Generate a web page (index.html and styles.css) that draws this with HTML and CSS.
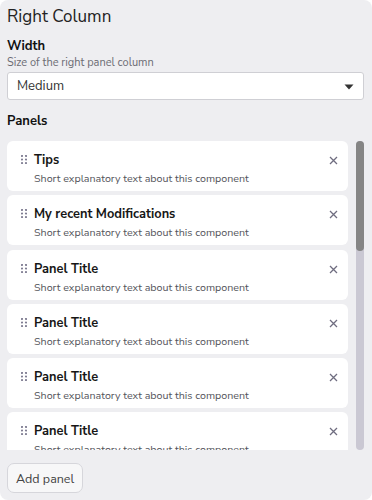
FILE: index.html
```html
<!DOCTYPE html>
<html>
<head>
<meta charset="utf-8">
<link rel="stylesheet" href="styles.css">
</head>
<body>
<div class="panel">
  <h1 class="title">Right Column</h1>
  <div class="field">
    <div class="label">Width</div>
    <div class="help">Size of the right panel column</div>
    <div class="select">
      <span>Medium</span>
      <svg class="caret" width="10" height="6" viewBox="0 0 10 6"><path d="M0.5 0.5h9L5 5.5z" fill="#333"/></svg>
    </div>
  </div>
  <div class="label panels-label">Panels</div>
  <div class="scroller">
    <div class="list">
      <div class="card">
        <svg class="handle" width="6" height="9" viewBox="0 0 6 9"><g fill="#7f7d92"><circle cx="1" cy="1" r="1.1"/><circle cx="5" cy="1" r="1.1"/><circle cx="1" cy="4.5" r="1.1"/><circle cx="5" cy="4.5" r="1.1"/><circle cx="1" cy="8" r="1.1"/><circle cx="5" cy="8" r="1.1"/></g></svg>
        <div class="text"><div class="ctitle">Tips</div><div class="csub">Short explanatory text about this component</div></div>
        <svg class="close" width="9" height="9" viewBox="0 0 9 9"><path d="M1 1l7 7M8 1l-7 7" stroke="#6f6d80" stroke-width="1.3"/></svg>
      </div>
      <div class="card">
        <svg class="handle" width="6" height="9" viewBox="0 0 6 9"><g fill="#7f7d92"><circle cx="1" cy="1" r="1.1"/><circle cx="5" cy="1" r="1.1"/><circle cx="1" cy="4.5" r="1.1"/><circle cx="5" cy="4.5" r="1.1"/><circle cx="1" cy="8" r="1.1"/><circle cx="5" cy="8" r="1.1"/></g></svg>
        <div class="text"><div class="ctitle">My recent Modifications</div><div class="csub">Short explanatory text about this component</div></div>
        <svg class="close" width="9" height="9" viewBox="0 0 9 9"><path d="M1 1l7 7M8 1l-7 7" stroke="#6f6d80" stroke-width="1.3"/></svg>
      </div>
      <div class="card">
        <svg class="handle" width="6" height="9" viewBox="0 0 6 9"><g fill="#7f7d92"><circle cx="1" cy="1" r="1.1"/><circle cx="5" cy="1" r="1.1"/><circle cx="1" cy="4.5" r="1.1"/><circle cx="5" cy="4.5" r="1.1"/><circle cx="1" cy="8" r="1.1"/><circle cx="5" cy="8" r="1.1"/></g></svg>
        <div class="text"><div class="ctitle">Panel Title</div><div class="csub">Short explanatory text about this component</div></div>
        <svg class="close" width="9" height="9" viewBox="0 0 9 9"><path d="M1 1l7 7M8 1l-7 7" stroke="#6f6d80" stroke-width="1.3"/></svg>
      </div>
      <div class="card">
        <svg class="handle" width="6" height="9" viewBox="0 0 6 9"><g fill="#7f7d92"><circle cx="1" cy="1" r="1.1"/><circle cx="5" cy="1" r="1.1"/><circle cx="1" cy="4.5" r="1.1"/><circle cx="5" cy="4.5" r="1.1"/><circle cx="1" cy="8" r="1.1"/><circle cx="5" cy="8" r="1.1"/></g></svg>
        <div class="text"><div class="ctitle">Panel Title</div><div class="csub">Short explanatory text about this component</div></div>
        <svg class="close" width="9" height="9" viewBox="0 0 9 9"><path d="M1 1l7 7M8 1l-7 7" stroke="#6f6d80" stroke-width="1.3"/></svg>
      </div>
      <div class="card">
        <svg class="handle" width="6" height="9" viewBox="0 0 6 9"><g fill="#7f7d92"><circle cx="1" cy="1" r="1.1"/><circle cx="5" cy="1" r="1.1"/><circle cx="1" cy="4.5" r="1.1"/><circle cx="5" cy="4.5" r="1.1"/><circle cx="1" cy="8" r="1.1"/><circle cx="5" cy="8" r="1.1"/></g></svg>
        <div class="text"><div class="ctitle">Panel Title</div><div class="csub">Short explanatory text about this component</div></div>
        <svg class="close" width="9" height="9" viewBox="0 0 9 9"><path d="M1 1l7 7M8 1l-7 7" stroke="#6f6d80" stroke-width="1.3"/></svg>
      </div>
      <div class="card">
        <svg class="handle" width="6" height="9" viewBox="0 0 6 9"><g fill="#7f7d92"><circle cx="1" cy="1" r="1.1"/><circle cx="5" cy="1" r="1.1"/><circle cx="1" cy="4.5" r="1.1"/><circle cx="5" cy="4.5" r="1.1"/><circle cx="1" cy="8" r="1.1"/><circle cx="5" cy="8" r="1.1"/></g></svg>
        <div class="text"><div class="ctitle">Panel Title</div><div class="csub">Short explanatory text about this component</div></div>
        <svg class="close" width="9" height="9" viewBox="0 0 9 9"><path d="M1 1l7 7M8 1l-7 7" stroke="#6f6d80" stroke-width="1.3"/></svg>
      </div>
    </div>
    <div class="scrollbar"><div class="thumb"></div></div>
  </div>
  <div class="footer">
    <button class="add">Add panel</button>
  </div>
</div>
</body>
</html>
```
FILE: styles.css
```css
* { box-sizing: border-box; }
html, body { margin: 0; padding: 0; background: #fff; }
body { font-family: "Nunito Sans", Lato, "Noto Sans", sans-serif; color: #1b1b1f; }
.panel {
  width: 372px;
  height: 500px;
  background: #eeeef1;
  border-radius: 8px;
  padding: 5px 8px 0 7px;
  display: flex;
  flex-direction: column;
  overflow: hidden;
}
.title {
  margin: 0;
  font-size: 17px;
  font-weight: 400;
  line-height: 24px;
  color: #222;
}
.field { margin-top: 8px; }
.label {
  font-size: 13px;
  font-weight: 700;
  line-height: 18px;
  color: #111;
}
.help {
  font-size: 11px;
  line-height: 15px;
  color: #6c6c74;
}
.select {
  margin-top: 2px;
  height: 28px;
  background: #fff;
  border: 1px solid #cfcfd4;
  border-radius: 3px;
  display: flex;
  align-items: center;
  justify-content: space-between;
  padding: 0 9px 0 9px;
  font-size: 13px;
  color: #333;
}
.caret { margin-top: 1px; }
.panels-label { margin-top: 12px; }
.scroller {
  margin-top: 11px;
  height: 309px;
  display: flex;
  gap: 8px;
}
.list {
  flex: 1;
  overflow: hidden;
  display: flex;
  flex-direction: column;
  gap: 4.3px;
}
.scrollbar {
  flex: none;
  width: 8px;
  background: #cac8d3;
  border-radius: 4px;
  display: flex;
  flex-direction: column;
}
.thumb {
  height: 110px;
  background: #858585;
  border-radius: 4px;
}
.card {
  flex: none;
  height: 50px;
  background: #fff;
  border-radius: 6px;
  display: flex;
  align-items: flex-start;
  padding: 10px 10px 0 14px;
}
.handle { margin-top: 4px; flex: none; }
.text { flex: 1; margin-left: 7px; }
.ctitle {
  font-size: 12.8px;
  font-weight: 700;
  line-height: 18px;
  color: #161616;
}
.csub {
  font-size: 10.7px;
  line-height: 16px;
  color: #55555c;
  margin-top: 2px;
}
.close { margin-top: 5px; flex: none; }
.footer {
  padding-top: 13px;
}
.add {
  font-family: inherit;
  font-size: 12.5px;
  color: #444;
  background: #f7f7f8;
  border: 1px solid #d6d6db;
  border-radius: 7px;
  height: 30px;
  padding: 0 8px;
}
```
